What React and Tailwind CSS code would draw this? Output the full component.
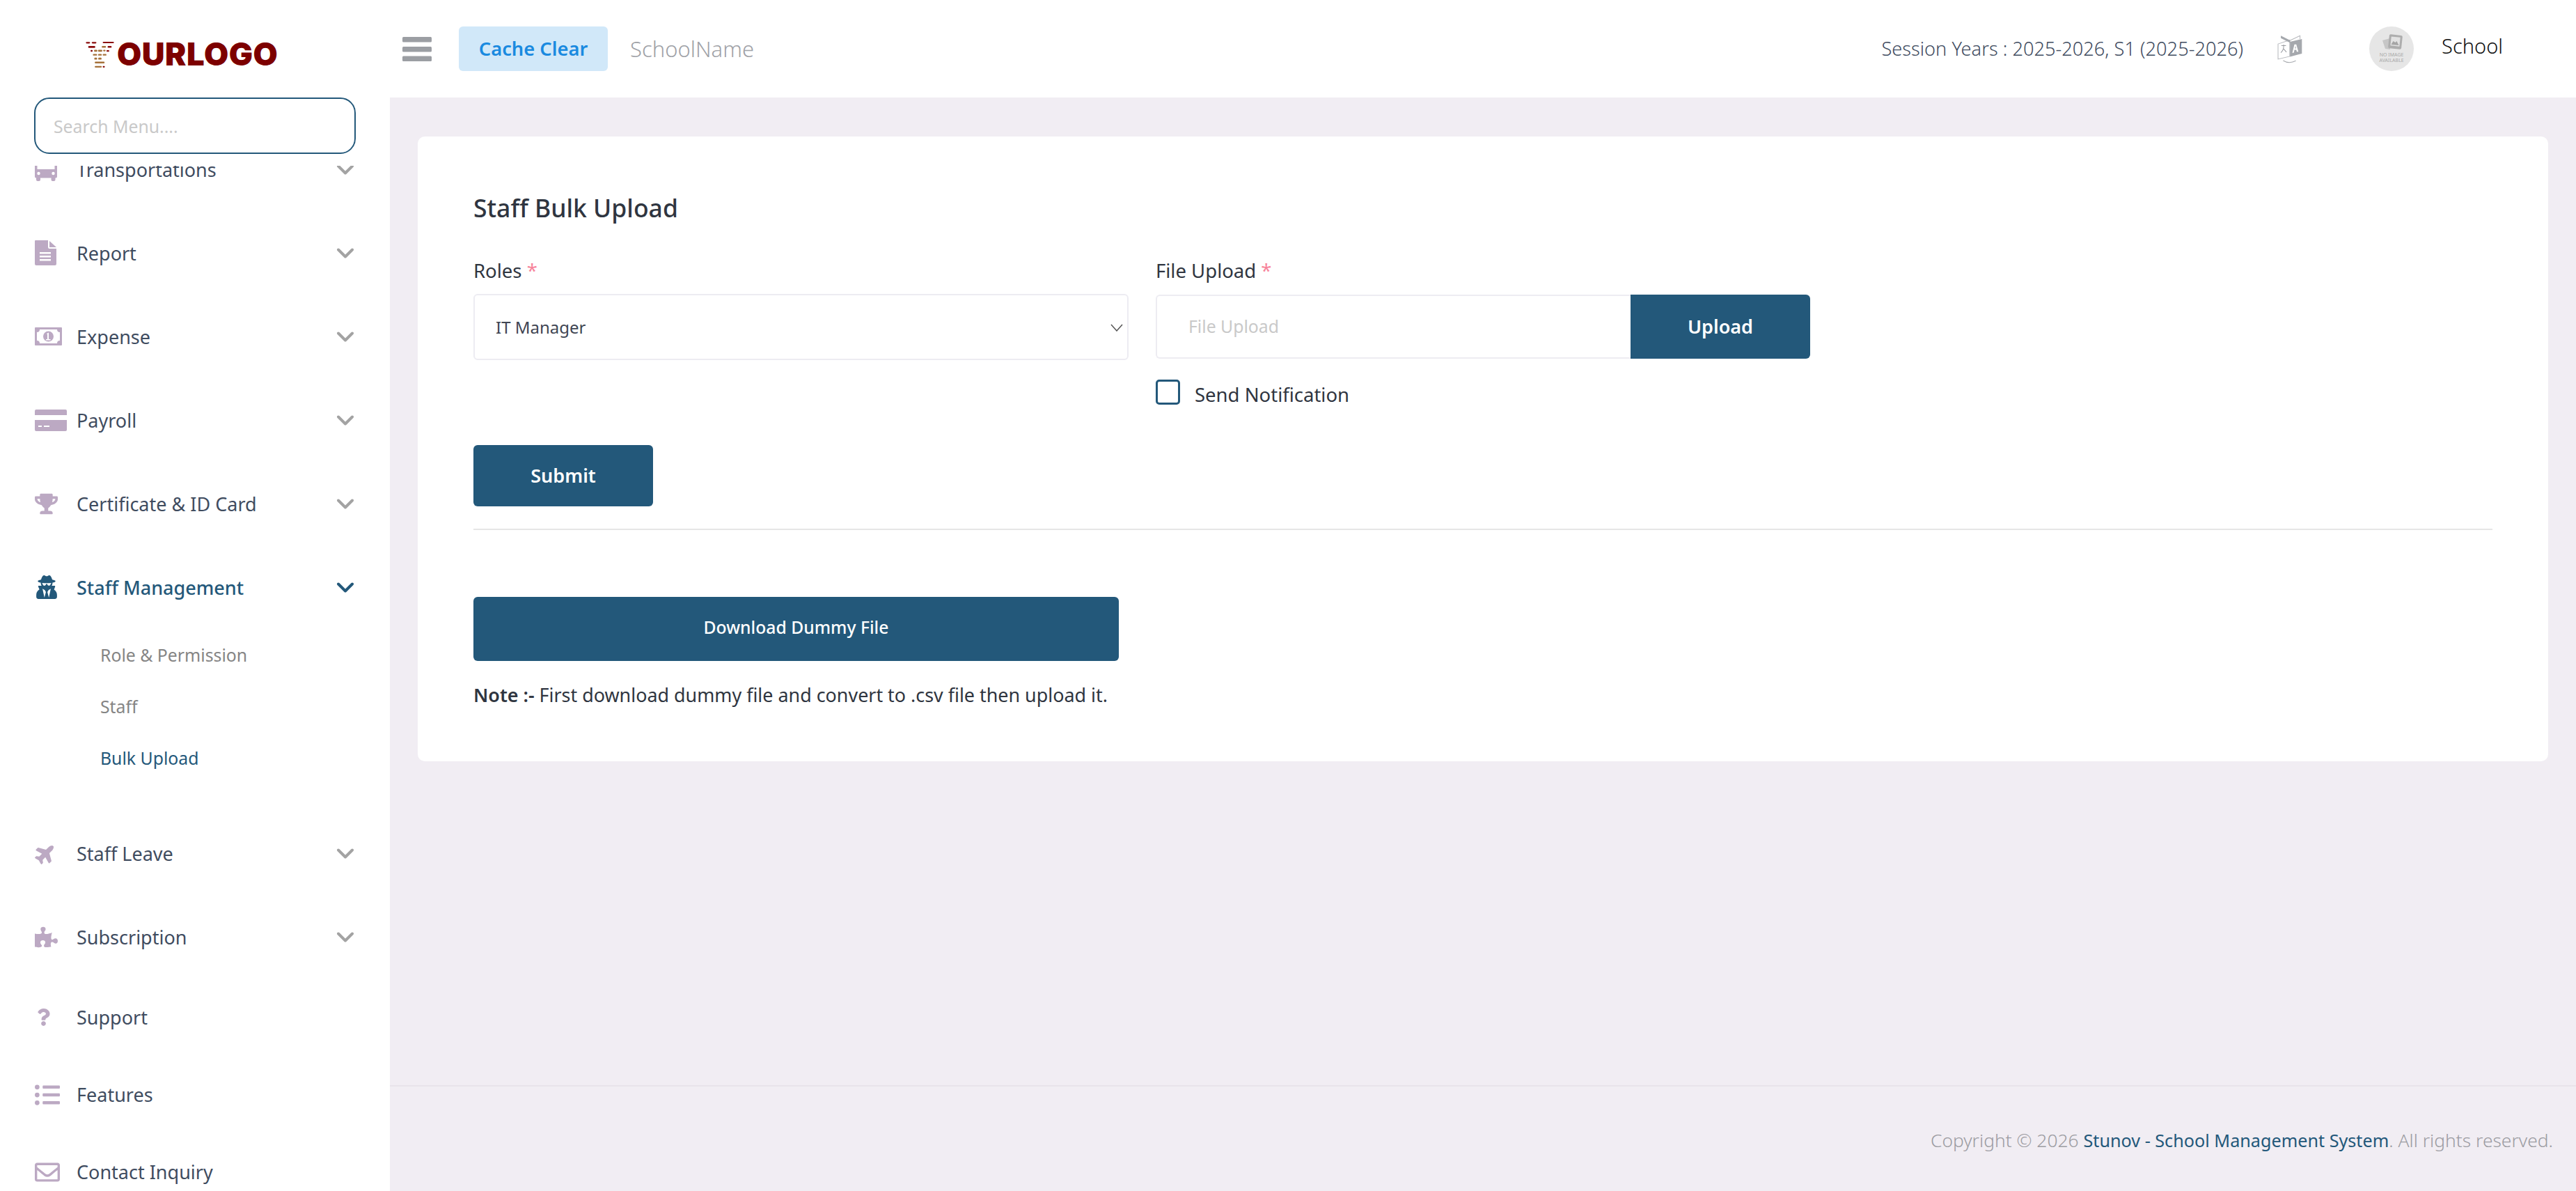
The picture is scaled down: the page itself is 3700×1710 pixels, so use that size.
import React from "react";
import { FaTrophy, FaUserSecret, FaPlane, FaPuzzlePiece, FaQuestion, FaListUl, FaRegEnvelope } from "react-icons/fa";

const BusIcon = () => (
  <svg width="32" height="36" viewBox="0 0 32 36" fill="currentColor">
    <rect x="0" y="0" width="3.500" height="20" />
    <rect x="28.500" y="0" width="3.500" height="20" />
    <rect x="0" y="18" width="32" height="12.500" rx="2" />
    <rect x="2" y="29" width="6" height="6" rx="2" />
    <rect x="23.500" y="29" width="6" height="6" rx="2" />
    <circle cx="5.500" cy="24" r="2.200" fill="#fff" />
    <circle cx="26.500" cy="24" r="2.200" fill="#fff" />
  </svg>
);

const MenuIcon = () => (
  <svg width="42" height="35" viewBox="0 0 42 35" fill="#9b9ea3" className="ml-[18px]">
    <rect y="0" width="42" height="7.500" rx="1.500" />
    <rect y="14" width="42" height="7.500" rx="1.500" />
    <rect y="27.500" width="42" height="7.500" rx="1.500" />
  </svg>
);

const FileIcon = () => (
  <svg width="31" height="36" viewBox="0 0 31 36" fill="currentColor">
    <path d="M1 0h18v10a2 2 0 0 0 2 2h10v22a2 2 0 0 1-2 2H2a2 2 0 0 1-2-2V1a1 1 0 0 1 1-1z" />
    <path d="M21 1l10 9H21z" />
    <rect x="7" y="17" width="16" height="2.500" fill="#fff" />
    <rect x="7" y="22" width="16" height="2.500" fill="#fff" />
    <rect x="7" y="27" width="16" height="2.500" fill="#fff" />
  </svg>
);

const MoneyIcon = () => (
  <svg width="39" height="26" viewBox="0 0 39 26" fill="currentColor">
    <rect width="39" height="26" rx="1" />
    <path d="M7 3h25a4 4 0 0 0 4 4v12a4 4 0 0 0-4 4H7a4 4 0 0 0-4-4V7a4 4 0 0 0 4-4z" fill="#fff" />
    <circle cx="19.500" cy="13" r="7.500" />
    <path d="M17 9l3-1.500V17h2.500v1.500h-6.500V17H18V10z" fill="#fff" />
  </svg>
);

const CardIcon = () => (
  <svg width="46" height="31" viewBox="0 0 46 31" fill="currentColor">
    <path d="M2 0h42a2 2 0 0 1 2 2v6H0V2a2 2 0 0 1 2-2z" />
    <path d="M0 15h46v14a2 2 0 0 1-2 2H2a2 2 0 0 1-2-2z" />
    <rect x="5" y="23" width="5" height="2" fill="#fff" />
    <rect x="13" y="23" width="8" height="2" fill="#fff" />
  </svg>
);

const Chevron = ({ active }) => (
  <svg width="24" height="15" viewBox="0 0 24 15" fill="none" stroke={active ? "#23587a" : "#a3a3a3"} strokeWidth="4" strokeLinecap="round" strokeLinejoin="round" className="mr-[52px] ml-auto">
    <path d="M2 2.500l10 10 10-10" />
  </svg>
);

const LogoMark = () => {
  const m = "#8a0d0d";
  const b = "#a5713a";
  const bricks = [
    [40, 43, 18, 6, m], [65, 43, 20, 6, m], [112, 42, 48, 6, m],
    [50, 60, 30, 8, m], [108, 60, 18, 7, b], [133, 60, 17, 7, m],
    [60, 77, 9, 7, m], [75, 76, 14, 8, b], [92, 76, 18, 8, b], [114, 76, 10, 7, b], [128, 78, 12, 6, m],
    [70, 94, 18, 7, b], [92, 94, 16, 7, b], [112, 94, 16, 7, b],
    [76, 110, 12, 8, b], [93, 110, 14, 8, b],
    [78, 127, 42, 7, b],
    [78, 145, 30, 7, b], [112, 145, 9, 7, m],
  ];
  return (
    <svg width="43" height="41" viewBox="36 36 128 122" className="mr-[3px] shrink-0">
      {bricks.map(([x, y, w, h, c], i) => (
        <rect key={i} x={x} y={y} width={w} height={h} rx="3.500" fill={c} />
      ))}
    </svg>
  );
};

const TranslateIcon = () => (
  <svg width="37" height="42" viewBox="35 55 110 125" className="ml-[49px] shrink-0">
    <path d="M38 97L88 80V150L38 162z" fill="#fff" stroke="#b5b7bb" strokeWidth="3" />
    <path d="M50 62L90 82V92L50 72z" fill="#a5a8ad" />
    <path d="M90 82L132 62V76" fill="none" stroke="#b5b7bb" strokeWidth="3" />
    <path d="M89 88L140 76V138L89 152z" fill="#a5a8ad" />
    <path d="M52 104h20M62 100v8c0 12-5 20-12 26M62 118l12 14" fill="none" stroke="#9a9da2" strokeWidth="3" />
    <path d="M99 135l9-36h8l9 31h-7l-2-8h-8l-2 12zM110 116h5l-2.500-11z" fill="#fff" fillRule="evenodd" />
    <path d="M60 168c16 10 36 10 54 1" fill="none" stroke="#a5a8ad" strokeWidth="3" />
  </svg>
);

const Avatar = () => (
  <div className="ml-[95px] flex h-[64px] w-[64px] shrink-0 flex-col items-center rounded-full bg-[#e6e6e6] pt-[11px]">
    <svg width="32" height="24" viewBox="0 0 32 24" className="ml-[2px]">
      <path d="M2 9l11-3v16l-7-1z" fill="#c6c6c6" />
      <rect x="11" y="1" width="19" height="20" rx="2" fill="#adadad" transform="rotate(6 20 11)" />
      <rect x="14" y="4" width="13" height="13" fill="#e2e2e2" transform="rotate(6 20 11)" />
      <path d="M14.500 15l3-5 3 2 2-2 3 6z" fill="#a5a5a5" />
    </svg>
    <span className="mt-[2px] text-center text-[7px] leading-[8px] font-normal whitespace-nowrap text-[#a9a9a9]">NO IMAGE<br />AVAILABLE</span>
  </div>
);

const Item = ({ icon, label, chevron = true, active, tall = true }) => (
  <div className={`flex items-center ${tall ? "h-[120px]" : "h-[111px]"}`}>
    <div className={`flex w-[60px] shrink-0 items-center ${active ? "text-[#23587a]" : "text-[#bca9c3]"}`}>{icon}</div>
    <span className={`text-[27px] leading-none whitespace-nowrap ${active ? "font-medium text-[#23587a]" : "text-[#3f4c5f]"}`}>{label}</span>
    {chevron && <Chevron active={active} />}
  </div>
);

const Sub = ({ label, active }) => (
  <div className={`flex h-[74px] items-center pl-[94px] text-[24.800px] leading-none ${active ? "text-[#23587a]" : "text-[#858585]"}`}>{label}</div>
);

const Req = () => <span className="text-[#f7849b]"> *</span>;

export default function App() {
  return (
    <div className="flex h-screen w-full overflow-hidden bg-[#f1edf3] font-['Noto_Sans',sans-serif] text-[#2f3540]">
      <aside className="flex w-[560px] shrink-0 flex-col bg-white">
        <div className="flex h-[140px] shrink-0 items-center pt-[16px] pl-[122px]">
          <LogoMark />
          <span className="font-['Inter',sans-serif] text-[45.500px] leading-none font-black tracking-[0.5px] text-[#7d0000]">OURLOGO</span>
        </div>
        <div className="shrink-0 pb-[17px] pl-[49px]">
          <input
            placeholder="Search Menu...."
            className="h-[81px] w-[462px] rounded-[22px] border-2 border-[#23587a] bg-white px-[26px] text-[24.800px] outline-none placeholder:text-[#c9c9c9]"
          />
        </div>
        <nav className="min-h-0 flex-1 overflow-hidden pl-[50px]">
          <div className="-mt-[55px]">
            <Item icon={<BusIcon />} label="Transportations" />
            <Item icon={<FileIcon />} label="Report" />
            <Item icon={<MoneyIcon />} label="Expense" />
            <Item icon={<CardIcon />} label="Payroll" />
            <Item icon={<FaTrophy size={33} />} label="Certificate & ID Card" />
            <Item icon={<FaUserSecret size={34} />} label="Staff Management" active />
            <div className="pb-[40px]">
              <Sub label="Role & Permission" />
              <Sub label="Staff" />
              <Sub label="Bulk Upload" active />
            </div>
            <Item icon={<FaPlane size={31} className="-rotate-45" />} label="Staff Leave" />
            <Item icon={<FaPuzzlePiece size={33} />} label="Subscription" />
            <Item icon={<FaQuestion size={25} />} label="Support" chevron={false} tall={false} />
            <Item icon={<FaListUl size={36} />} label="Features" chevron={false} tall={false} />
            <Item icon={<FaRegEnvelope size={36} />} label="Contact Inquiry" chevron={false} tall={false} />
          </div>
        </nav>
      </aside>

      <div className="flex min-w-0 flex-1 flex-col">
        <header className="flex h-[140px] shrink-0 items-center bg-white">
          <MenuIcon />
          <button className="ml-[39px] h-[64px] w-[214px] rounded-[6px] bg-[#d1e8f9] text-[27.300px] font-semibold text-[#1a8ae0]">Cache Clear</button>
          <span className="ml-[32px] text-[31px] font-light text-[#9fa2a7]">SchoolName</span>
          <span className="ml-auto text-[27.200px] font-light text-[#3f4c5f]">Session Years : 2025-2026, S1 (2025-2026)</span>
          <TranslateIcon />
          <Avatar />
          <span className="mr-[105px] ml-[40px] -translate-y-[4px] text-[29px] font-light text-[#111]">School</span>
        </header>

        <main className="min-h-0 flex-1 px-[40px] pt-[56px]">
          <section className="rounded-[10px] bg-white px-[80px] pt-[78px] pb-[75px]">
            <h1 className="text-[35.500px] leading-[48px] font-medium text-[#2f3540]">Staff Bulk Upload</h1>
            <div className="mt-[47px] flex gap-[39px]">
              <div className="w-[941px]">
                <label className="block text-[27.500px] leading-[40px]">Roles<Req /></label>
                <div className="relative mt-[13px]">
                  <select className="h-[95px] w-full appearance-none rounded-[6px] border-2 border-[#edecf2] bg-white pl-[30px] text-[24px] text-[#3f4653] outline-none">
                    <option>IT Manager</option>
                  </select>
                  <svg width="18" height="11" viewBox="0 0 18 11" fill="none" stroke="#555" strokeWidth="1.500" className="pointer-events-none absolute top-[43px] right-[8px]">
                    <path d="M1 1l8 9 8-9" />
                  </svg>
                </div>
              </div>
              <div className="w-[940px]">
                <label className="block text-[27.500px] leading-[40px]">File Upload<Req /></label>
                <div className="mt-[14px] flex h-[92px]">
                  <input placeholder="File Upload" className="min-w-0 flex-1 rounded-l-[6px] border-2 border-r-0 border-[#edecf2] bg-white pl-[45px] text-[24.800px] outline-none placeholder:text-[#c9c9c9]" />
                  <button className="w-[258px] rounded-r-[6px] bg-[#23587a] text-[27px] font-semibold text-white">Upload</button>
                </div>
                <div className="mt-[30px] flex items-start">
                  <span className="h-[36px] w-[35px] rounded-[5px] border-[3px] border-[#23587a]" />
                  <span className="mt-[4px] ml-[21px] text-[27.500px] leading-[36px]">Send Notification</span>
                </div>
              </div>
            </div>
            <button className="mt-[54px] block h-[88px] w-[258px] rounded-[6px] bg-[#23587a] text-[27px] font-semibold text-white">Submit</button>
            <hr className="mt-[32px] border-t-2 border-[#e6e6e6]" />
            <button className="mt-[96px] block h-[92px] w-[927px] rounded-[6px] bg-[#23587a] pb-[4px] text-[24.700px] font-medium text-white">Download Dummy File</button>
            <p className="mt-[29px] text-[26.900px] leading-[40px]"><span className="font-semibold">Note :-</span> First download dummy file and convert to .csv file then upload it.</p>
          </section>
        </main>

        <footer className="flex h-[152px] shrink-0 items-start justify-end border-t-2 border-[#e8e3ea] pt-[60px] pr-[33px] text-[26.400px] leading-[34px] font-light text-[#9c9ca2]">
          <span>Copyright © 2026 <span className="text-[25.200px] font-normal text-[#23587a]">Stunov - School Management System</span>. All rights reserved.</span>
        </footer>
      </div>
    </div>
  );
}
